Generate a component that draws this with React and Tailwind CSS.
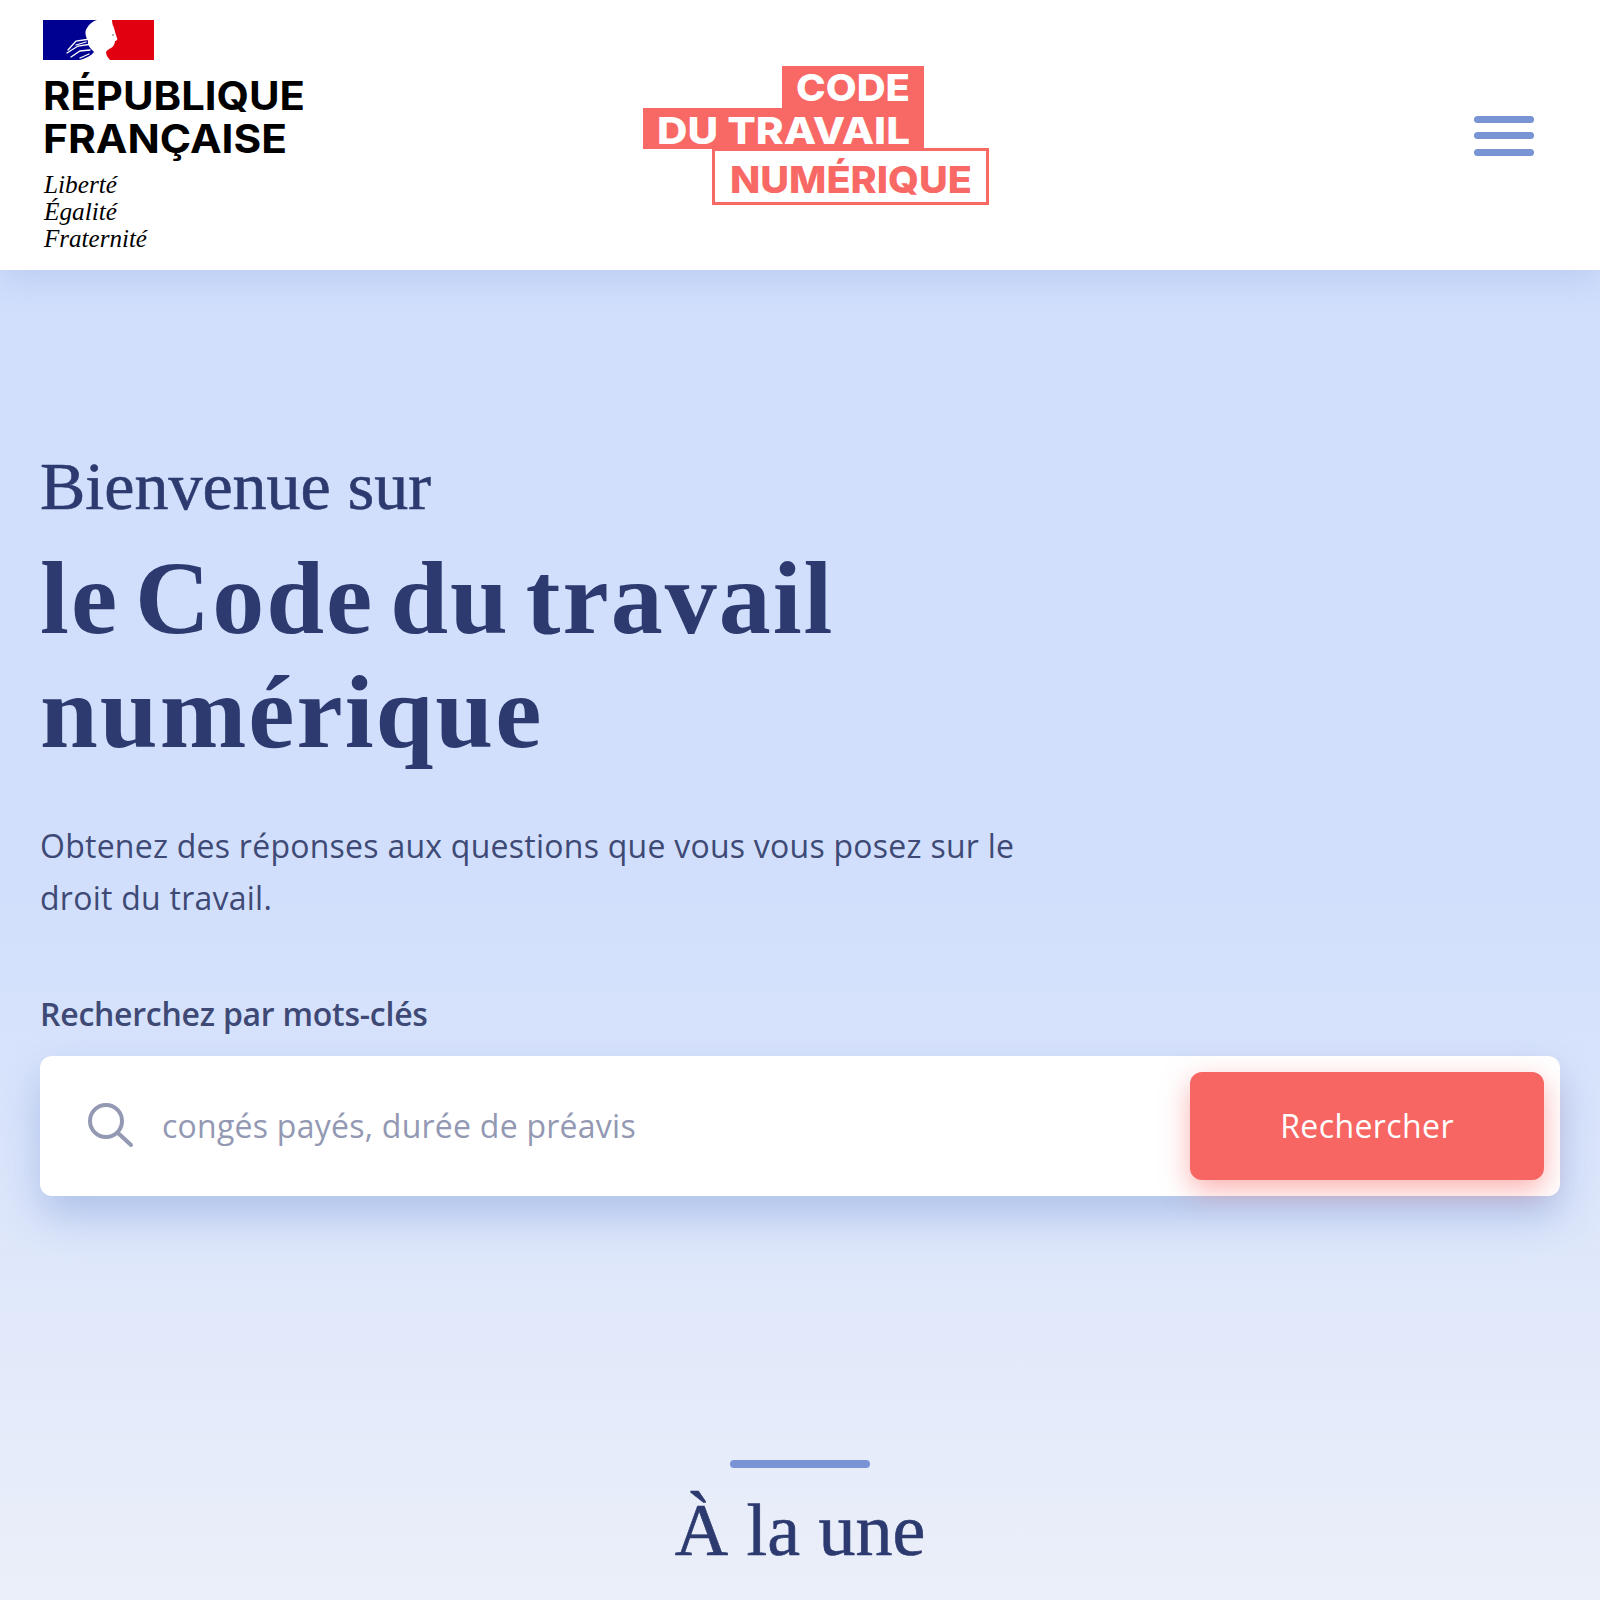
import React from 'react';

const RepubliqueLogo = () => (
    <svg width="270" height="270" viewBox="0 0 270 270" className="shrink-0">
        <rect x="3" y="20" width="60" height="40" fill="#000091" />
        <rect x="60" y="20" width="54" height="40" fill="#e1000f" />
        <path d="M57 20 L72 20 C72 23 73 26 74 28 C75 32 76 35 77 38 C78 40 76 41 75 41 C75 44 73 47 71 48 C69 49 67 50 66 52 C66 55 68 58 70 60 L40 60 C46 58 51 56 54 52 C51 49 47 45 48 41 C46 37 44 32 47 28 C49 24 53 21 57 20 Z" fill="#fff" />
        <g stroke="#fff" strokeWidth="1.3" fill="none" strokeLinecap="round">
            <path d="M28 50 L36 41 L50 39" />
            <path d="M27 53 L38 46 L52 44" />
            <path d="M31 57 L40 51 L50 50" />
            <path d="M36 45 L46 42" />
            <path d="M40 58 L49 54" />
        </g>
        <circle cx="73" cy="35" r="1" fill="#9a9a9a" />
        <g fontFamily="Inter, sans-serif" fontWeight="700" fontSize="39" fill="#000">
            <text x="3" y="110" textLength="262" lengthAdjust="spacingAndGlyphs">RÉPUBLIQUE</text>
            <text x="3" y="153" textLength="244" lengthAdjust="spacingAndGlyphs">FRANÇAISE</text>
        </g>
        <g fontFamily="'Liberation Serif', serif" fontStyle="italic" fontSize="25" fill="#000">
            <text x="4" y="193" textLength="73" lengthAdjust="spacingAndGlyphs">Liberté</text>
            <text x="4" y="220" textLength="73" lengthAdjust="spacingAndGlyphs">Égalité</text>
            <text x="4" y="247" textLength="103" lengthAdjust="spacingAndGlyphs">Fraternité</text>
        </g>
    </svg>
);

const CodeLogo = () => (
    <svg width="348" height="162" viewBox="0 -10 348 162" className="shrink-0">
        <rect x="139" y="0" width="142" height="43" fill="#f86966" />
        <rect x="0" y="42" width="281" height="41" fill="#f86966" />
        <rect x="70.5" y="83.5" width="274" height="54" fill="#fff" stroke="#f86966" strokeWidth="3" />
        <g fontFamily="Inter, sans-serif" fontWeight="800" fontSize="37">
            <text x="153" y="35" fill="#fff" textLength="114" lengthAdjust="spacingAndGlyphs">CODE</text>
            <text x="14" y="78" fill="#fff" textLength="253" lengthAdjust="spacingAndGlyphs">DU TRAVAIL</text>
            <text x="87" y="127" fill="#f86966" textLength="242" lengthAdjust="spacingAndGlyphs">NUMÉRIQUE</text>
        </g>
    </svg>
);

const SearchIcon = () => (
    <svg width="48" height="50" viewBox="0 0 48 50" fill="none" stroke="#9398b3" strokeWidth="4" strokeLinecap="round" className="shrink-0">
        <circle cx="20" cy="20" r="16" />
        <path d="M32 32 L45 44" />
    </svg>
);

const App = () => {
    return (
        <div className="h-[1600px] overflow-hidden bg-[linear-gradient(180deg,#d1dffc_0%,#d1dffc_55%,#ebeff9_100%)] font-['Open_Sans',sans-serif]">
            <header className="relative flex h-[270px] items-center bg-white pl-[40px] pr-[66px] shadow-[0_10px_30px_rgba(120,150,215,0.25)]">
                <RepubliqueLogo />
                <div className="ml-[333px] mt-[4px]">
                    <CodeLogo />
                </div>
                <button className="ml-auto mt-[1px] flex w-[60px] flex-col gap-[9.5px]">
                    <span className="h-[7px] rounded-full bg-[#7994d4]"></span>
                    <span className="h-[7px] rounded-full bg-[#7994d4]"></span>
                    <span className="h-[7px] rounded-full bg-[#7994d4]"></span>
                </button>
            </header>

            <main className="px-[40px] pt-[178px]">
                <p className="font-['Liberation_Serif',serif] text-[68px] leading-[76px] text-[#2c3a6f] [-webkit-text-stroke:0.6px_#2c3a6f]">Bienvenue sur</p>
                <h1 className="mt-[17px] w-[1000px] font-['Liberation_Serif',serif] text-[104px] font-bold leading-[114px] tracking-[2px] text-[#2c3a6f] [word-spacing:-12px]">le Code du travail numérique</h1>
                <p className="mt-[51px] w-[1000px] text-[32px] leading-[52px] tracking-[0.25px] text-[#3e4a75]">Obtenez des réponses aux questions que vous vous posez sur le droit du travail.</p>
                <label className="mt-[64px] block text-[32px] font-semibold leading-[52px] tracking-[-0.25px] text-[#3e4a75]">Recherchez par mots-clés</label>
                <div className="mt-[16px] flex h-[140px] items-center rounded-[12px] bg-white pl-[46px] pr-[16px] shadow-[0_20px_40px_rgba(120,150,215,0.45)]">
                    <SearchIcon />
                    <input className="ml-[28px] min-w-0 flex-1 bg-transparent text-[32px] tracking-[0.25px] outline-none placeholder:text-[#9398b3]" placeholder="congés payés, durée de préavis" />
                    <button className="h-[108px] w-[354px] shrink-0 rounded-[12px] bg-[#f76662] text-[32px] tracking-[0.4px] text-white shadow-[0_10px_28px_rgba(248,104,100,0.5)]">Rechercher</button>
                </div>
            </main>

            <section className="mt-[264px] flex flex-col items-center">
                <div className="h-[8px] w-[140px] rounded-full bg-[#7994d4]"></div>
                <h2 className="mt-[17px] font-['Liberation_Serif',serif] text-[74px] leading-[90px] text-[#2c3a6f] [-webkit-text-stroke:0.6px_#2c3a6f]">À la une</h2>
            </section>
        </div>
    );
};

export default App;
